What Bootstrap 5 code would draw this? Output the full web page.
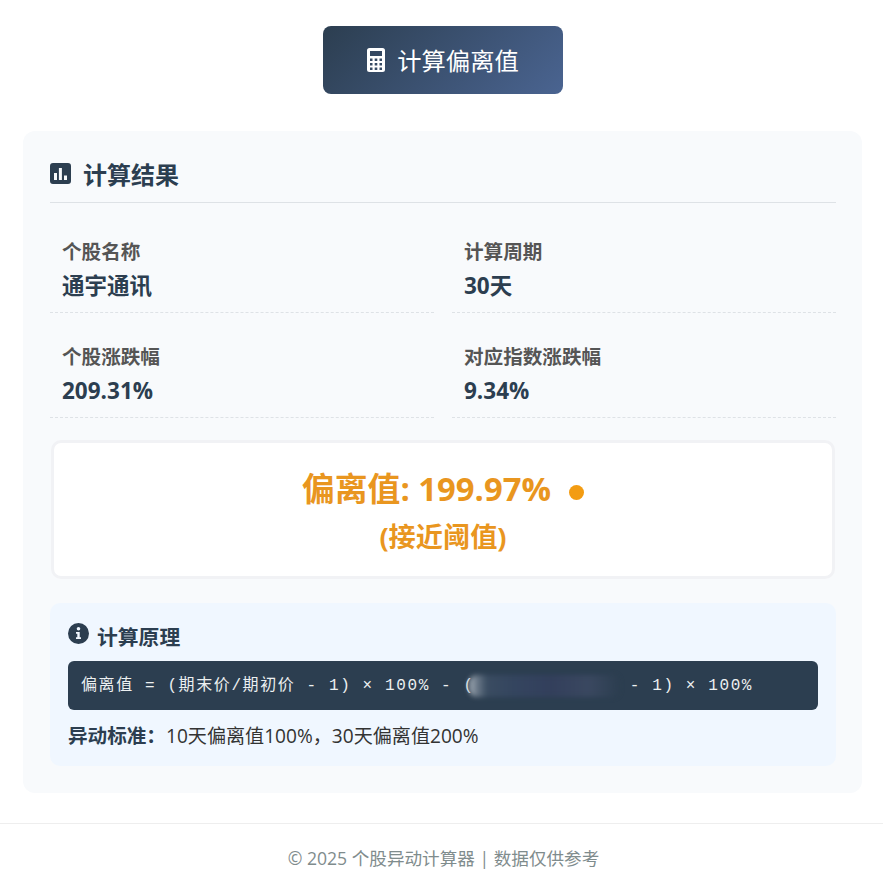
<!DOCTYPE html>
<html lang="zh">
<head>
<meta charset="utf-8">
<title>个股异动计算器</title>
<link href="https://cdn.jsdelivr.net/npm/bootstrap@5.3.0/dist/css/bootstrap.min.css" rel="stylesheet">
<style>
html,body{height:883px;overflow:hidden;background:#fff}
body{font-family:"Open Sans","Noto Sans CJK SC",sans-serif;color:#2c3e50;line-height:1.5}
svg{flex-shrink:0}
.page-wrap{padding:26px 21px 0 23px}
.calc-btn{width:240px;height:68px;border:0;border-radius:8px;background:linear-gradient(135deg,#2c3e50,#4a6491);color:#fff;font-size:24.3px;line-height:1;gap:12px;padding:0 0 0 1px}
.calc-btn span{position:relative;top:1px}
.calc-btn:hover{color:#fff}
.result-panel{margin-top:37px;height:662px;background:#f8fafc;border-radius:12px;padding:27px 26px 0 27px}
.panel-title{height:45px;border-bottom:1px solid #dee2e6;font-size:24px;font-weight:700;line-height:36px;gap:12px;margin:0;padding-bottom:10px}
.panel-title svg{margin-top:-4px}
.stat-grid{display:grid;grid-template-columns:1fr 1fr;column-gap:18px;row-gap:21px;margin-top:26px}
.stat-item{height:84px;padding:0 12px;border-bottom:1px dashed #dee2e6}
.stat-label{font-size:19.6px;font-weight:700;color:#555;line-height:28px;padding-top:9px;height:37px}
.stat-value{font-size:22.5px;font-weight:700;line-height:34px;margin-top:3px}
.deviation-box{margin:22px 1px 0;height:139px;background:#fff;border:3px solid #f1f2f5;border-radius:10px;color:#e9961f;font-weight:700;text-align:center;padding-top:22px}
.dev-main{font-size:32.8px;line-height:48px;gap:18px}
.dev-dot{width:15px;height:15px;border-radius:50%;background:#f39c12;margin-top:7px}
.dev-sub{font-size:27.2px;line-height:38px;margin-top:5px}
.principle-box{margin-top:24px;height:163px;background:#f0f7ff;border-radius:10px;padding:18px}
.principle-title{font-size:20.8px;font-weight:700;line-height:32px;gap:8px;margin:0;padding-bottom:2px}
.principle-title svg{margin-top:-7px}
.formula-box{margin-top:6px;height:49px;background:#2c3e50;color:#ecf0f1;border-radius:6px;padding:0 13px;font-family:"Liberation Mono","Noto Sans CJK SC",monospace;font-size:16px;letter-spacing:1.6px;line-height:50px;white-space:pre}
.blur-part{display:inline-block;width:150px;height:22px;margin-left:-6px;vertical-align:middle;border-radius:8px;background:linear-gradient(90deg,#aab3bc 0,#6d7b8a 5%,#3a4c61 12%,#34455f 30%,#333f5c 55%,#3a4860 80%,#2c3e50 100%);filter:blur(2.5px)}
.criteria-line{font-size:19.1px;line-height:30px;margin-top:11px;color:#333}
.criteria-line strong{color:#2c3e50;font-size:19.6px}
.site-foot{position:absolute;left:0;right:0;top:823px;border-top:1px solid #eee;text-align:center;color:#7f8c8d;font-size:17.6px;line-height:26px;padding:21px 0 0 4px}
</style>
</head>
<body>
<div class="page-wrap">
  <div class="d-flex justify-content-center">
    <button class="btn calc-btn d-flex align-items-center justify-content-center" type="button">
      <svg width="18" height="24" viewBox="0 0 18 24"><path fill="#fff" fill-rule="evenodd" d="M2.500 0h13A2.500 2.500 0 0 1 18 2.500v19a2.500 2.500 0 0 1-2.500 2.500h-13A2.500 2.500 0 0 1 0 21.500v-19A2.500 2.500 0 0 1 2.500 0zM3 3v5h12V3zM3 10.500v2.500h2.500v-2.500zM7.700 10.500v2.500h2.600v-2.500zM12.500 10.500v2.500H15v-2.500zM3 15v2.500h2.500V15zM7.700 15v2.500h2.600V15zM12.500 15v2.500H15V15zM3 19.500V22h2.500v-2.500zM7.700 19.500V22h2.600v-2.500zM12.500 19.500V22H15v-2.500z"/></svg>
      <span>计算偏离值</span>
    </button>
  </div>
  <section class="result-panel">
    <h2 class="panel-title d-flex align-items-center">
      <svg width="21" height="21" viewBox="0 0 21 21"><path fill="#2c3e50" fill-rule="evenodd" d="M3 0h15a3 3 0 0 1 3 3v15a3 3 0 0 1-3 3H3a3 3 0 0 1-3-3V3a3 3 0 0 1 3-3zM4 10v7h3v-7zM8.900 5v12h3V5zM14 12.500v4.500h3v-4.500z"/></svg>
      <span>计算结果</span>
    </h2>
    <div class="stat-grid">
      <div class="stat-item"><div class="stat-label">个股名称</div><div class="stat-value">通宇通讯</div></div>
      <div class="stat-item"><div class="stat-label">计算周期</div><div class="stat-value">30天</div></div>
      <div class="stat-item"><div class="stat-label">个股涨跌幅</div><div class="stat-value">209.31%</div></div>
      <div class="stat-item"><div class="stat-label">对应指数涨跌幅</div><div class="stat-value">9.34%</div></div>
    </div>
    <div class="deviation-box">
      <div class="dev-main d-flex justify-content-center align-items-center"><span>偏离值: 199.97%</span><span class="dev-dot"></span></div>
      <div class="dev-sub">(接近阈值)</div>
    </div>
    <div class="principle-box">
      <h3 class="principle-title d-flex align-items-center">
        <svg width="21" height="21" viewBox="0 0 21 21"><path fill="#2c3e50" fill-rule="evenodd" d="M10.500 0a10.500 10.500 0 1 1 0 21a10.500 10.500 0 0 1 0-21zM10.500 4a1.800 1.800 0 1 0 0 3.600a1.800 1.800 0 0 0 0-3.600zM8 9v1.800h1.300v3.400H8V16h5v-1.800h-1.300V9z"/></svg>
        <span>计算原理</span>
      </h3>
      <div class="formula-box">偏离值 = (期末价/期初价 - 1) × 100% - (<span class="blur-part"></span> - 1) × 100%</div>
      <p class="criteria-line mb-0"><strong>异动标准：</strong>10天偏离值100%，30天偏离值200%</p>
    </div>
  </section>
</div>
<footer class="site-foot">© 2025 个股异动计算器 | 数据仅供参考</footer>
<script src="https://cdn.jsdelivr.net/npm/bootstrap@5.3.0/dist/js/bootstrap.bundle.min.js"></script>
</body>
</html>
